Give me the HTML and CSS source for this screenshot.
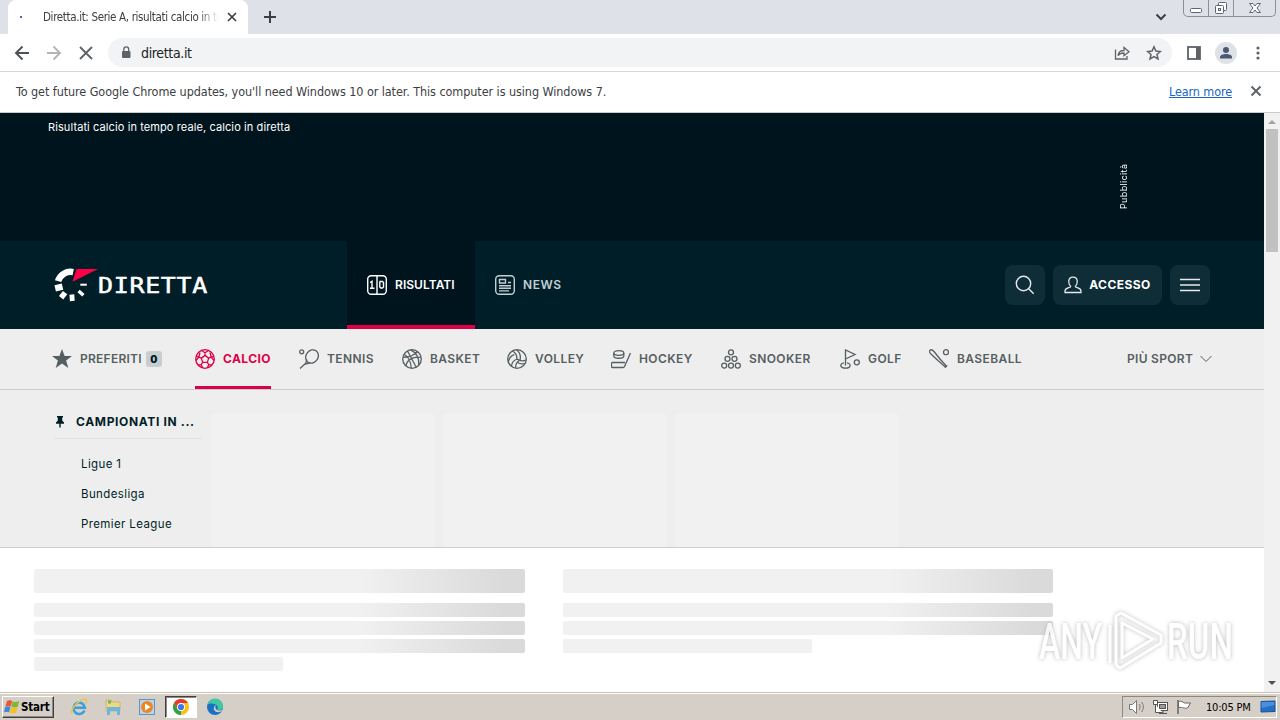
FILE: index.html
```html
<!DOCTYPE html>
<html lang="it">
<head>
    <meta charset="UTF-8">
    <meta name="viewport" content="width=device-width, initial-scale=1.0">
    <title>Diretta.it: Serie A, risultati calcio in tempo reale</title>
    <link rel="stylesheet" href="styles.css">
</head>
<body>
    <div class="tab-strip">
        <div class="tab">
            <span class="tab-loader"></span>
            <span class="tab-title">Diretta.it: Serie A, risultati calcio in te</span>
            <svg class="tab-close" width="10" height="10" viewBox="0 0 10 10" stroke="#3c4043" stroke-width="1.7"><path d="M1 1l8 8M9 1L1 9"/></svg>
        </div>
        <svg class="new-tab" width="14" height="14" viewBox="0 0 14 14" stroke="#3c4043" stroke-width="2"><path d="M7 1v12M1 7h12"/></svg>
        <svg class="tab-search" width="12" height="8" viewBox="0 0 12 8" fill="none" stroke="#3c4043" stroke-width="2"><path d="M1.5 1.5L6 6l4.500-4.500"/></svg>
        <div class="window-controls">
            <span class="control"><svg width="14" height="16" viewBox="0 0 14 16"><rect x="1.500" y="8.500" width="11" height="4" rx="1" fill="#fff" stroke="#60646e"/></svg></span>
            <span class="control"><svg width="14" height="16" viewBox="0 0 14 16" fill="#fff" stroke="#60646e"><rect x="4.500" y="2.500" width="8" height="8" rx="1"/><rect x="1.500" y="5.500" width="8" height="8" rx="1"/><rect x="4.500" y="8.500" width="2" height="2"/></svg></span>
            <span class="control control-close"><svg width="14" height="16" viewBox="0 0 14 16" fill="#fff" stroke="#60646e"><path d="M1.500 3.500h3.500l2 2.500 2-2.500h3.500L9 8l3.500 4.500H9L7 10l-2 2.500H1.500L5 8z"/></svg></span>
        </div>
    </div>

    <div class="toolbar">
        <svg class="tool-back" width="16" height="16" viewBox="0 0 16 16" fill="none" stroke="#4d5156" stroke-width="1.900"><path d="M15 8H2M8.500 1.500L2 8l6.500 6.500"/></svg>
        <svg class="tool-forward" width="16" height="16" viewBox="0 0 16 16" fill="none" stroke="#b3b5b8" stroke-width="1.900"><path d="M1 8h13M7.500 1.500L14 8l-6.500 6.500"/></svg>
        <svg class="tool-stop" width="14" height="14" viewBox="0 0 14 14" stroke="#5f6368" stroke-width="1.900"><path d="M1 1l12 12M13 1L1 13"/></svg>
        <div class="omnibox">
            <svg width="10" height="13" viewBox="0 0 10 13"><rect x="1" y="5" width="8.500" height="7" rx="1" fill="#5f6368"/><path d="M2.800 5.500V3.300a2.400 2.400 0 0 1 4.900 0v2.200" fill="none" stroke="#5f6368" stroke-width="1.300"/></svg>
            <span class="url">diretta.it</span>
            <svg class="share" width="16" height="16" viewBox="0 0 16 16" fill="none" stroke="#5f6368" stroke-width="1.300"><path d="M1.500 4.500v9.500h11.500v-3M4 10.500c.5-3.500 2.500-5 6-5V2.500L15 6.700l-5 4V8c-2.500 0-4.500.5-6 2.500z"/></svg>
            <svg class="bookmark" width="16" height="16" viewBox="0 0 16 16" fill="none" stroke="#5f6368" stroke-width="1.500"><path d="M8 1.800l1.900 4.200 4.500.5-3.400 3 1 4.500L8 11.700 4 14l1-4.500-3.400-3L6.100 6z"/></svg>
        </div>
        <svg class="side-panel" width="14" height="14" viewBox="0 0 14 14"><rect x="1" y="1" width="12" height="12" fill="none" stroke="#5f6368" stroke-width="1.800"/><path d="M9 1h4v12H9z" fill="#5f6368"/></svg>
        <svg class="profile" width="22" height="22" viewBox="0 0 22 22"><circle cx="11" cy="11" r="11" fill="#dee1e6"/><circle cx="11" cy="8" r="3" fill="#4a5873"/><path d="M5 16.500v-1.200c0-2.200 3-3.300 6-3.300s6 1.100 6 3.300v1.200z" fill="#4a5873"/></svg>
        <svg class="menu-dots" width="4" height="14" viewBox="0 0 4 14" fill="#5f6368"><circle cx="2" cy="2" r="1.600"/><circle cx="2" cy="7" r="1.600"/><circle cx="2" cy="12" r="1.600"/></svg>
    </div>

    <div class="infobar">
        <span class="infobar-text">To get future Google Chrome updates, you'll need Windows 10 or later. This computer is using Windows 7.</span>
        <a class="infobar-link" href="#">Learn more</a>
        <svg width="12" height="12" viewBox="0 0 12 12" stroke="#5f6368" stroke-width="1.900"><path d="M1.500 1.500l9 9M10.500 1.500l-9 9"/></svg>
    </div>

    <div class="viewport">
        <main class="page">
            <div class="top-banner">
                <h1 class="seo-title">Risultati calcio in tempo reale, calcio in diretta</h1>
                <span class="ad-label">Pubblicità</span>
            </div>

            <header class="header">
                <div class="logo">
                    <svg width="154" height="34" viewBox="0 0 154 34">
                        <path d="M4.100 13.200A13 13 0 0 1 19.200 4.100" fill="none" stroke="#fff" stroke-width="6.500"/>
                        <g stroke="#fff">
                            <path d="M8.500 18.700l-7.300 1.700" stroke-width="6.500"/>
                            <path d="M11.100 24.600l-4 5.100" stroke-width="5.500"/>
                            <path d="M17.900 26.500l.4 6.500" stroke-width="4.800"/>
                            <path d="M24.600 23l4.800 4.200" stroke-width="3.500"/>
                            <path d="M26.300 16.700h6.500" stroke-width="2"/>
                        </g>
                        <path d="M22.500 1H44L18.500 13.800z" fill="#ff0046"/>
                        <text class="logo-text" x="44" y="25" textLength="110" lengthAdjust="spacingAndGlyphs">DIRETTA</text>
                    </svg>
                </div>
                <nav class="main-nav">
                    <a class="main-link active">
                        <svg width="20" height="20" viewBox="0 0 20 20" fill="none" stroke="#fff" stroke-width="1.400"><rect x=".7" y=".7" width="18.600" height="18.600" rx="3.500"/><path d="M10 1v18M3 7.500l2-1.200V13M3 13.200h4.500M13 6.500h2.500l1 1v4.500l-1 1H13.800l-1-1V7.500z"/></svg>
                        <span>RISULTATI</span>
                    </a>
                    <a class="main-link">
                        <svg width="20" height="20" viewBox="0 0 20 20" fill="none" stroke="#c3cfd3" stroke-width="1.400"><rect x=".7" y=".7" width="18.600" height="18.600" rx="3.500"/><path d="M4.500 4.500h6v3.500h-6zM13 7.500h3M4 10.700h12M4 13.300h12M4 15.900h10"/></svg>
                        <span>NEWS</span>
                    </a>
                </nav>
                <div class="header-buttons">
                    <button class="header-button"><svg width="20" height="20" viewBox="0 0 20 20" fill="none" stroke="#e6eaec" stroke-width="1.400"><circle cx="8.500" cy="8.500" r="7.200"/><path d="M13.700 13.700l5 5"/></svg></button>
                    <button class="header-button login">
                        <svg width="18" height="18" viewBox="0 0 18 18" fill="none" stroke="#e6eaec" stroke-width="1.300"><path d="M6.700 10.500C4 8 3.500 1.200 9 1.200s5 6.800 2.300 9.300c0 1.600 5.700.8 5.700 4.500v1.500H1V15c0-3.700 5.700-2.900 5.700-4.500z"/></svg>
                        <span>ACCESSO</span>
                    </button>
                    <button class="header-button"><svg width="20" height="14" viewBox="0 0 20 14" stroke="#e6eaec" stroke-width="1.700"><path d="M0 1.500h20M0 7h20M0 12.500h20"/></svg></button>
                </div>
            </header>

            <nav class="sport-nav">
                <a class="sport favourites">
                    <svg width="20" height="20" viewBox="0 0 20 20" fill="#555e61"><path d="M10 0l2.600 7H20l-5.900 4.500 2.200 7.500-6.300-4.500L3.700 19l2.200-7.500L0 7h7.400z"/></svg>
                    <span>PREFERITI</span><b class="fav-count">0</b>
                </a>
                <a class="sport active">
                    <svg width="20" height="20" viewBox="0 0 20 20"><circle cx="10" cy="10" r="9.300"/><path d="M10 6.400l3.700 2.700-1.400 4.300H7.700L6.300 9.100zM10 6.400V3.700M13.700 9.100l2.500-.9M12.300 13.400l1.600 2.200M7.700 13.400l-1.600 2.200M6.300 9.100l-2.500-.9M6.500 1.500L10 3.700l3.500-2.200M18.900 7.300l-2.700.9-1.200-4.700M16.900 16l-3 -.4-1.700 3.300M7.800 18.900l-1.700-3.300-3 .4M1.100 7.300l2.700.9 1.200-4.700M1 11.500l2.800-3.300M19 11.500l-2.800-3.300"/></svg>
                    <span>CALCIO</span>
                </a>
                <a class="sport">
                    <svg width="20" height="20" viewBox="0 0 20 20"><ellipse cx="13" cy="7.500" rx="6" ry="7" transform="rotate(38 13 7.500)"/><path d="M7.800 10.300L6.500 15l4.800-1.200M6.500 14.500L1 19.500"/><circle cx="2.700" cy="2.800" r="2"/></svg>
                    <span>TENNIS</span>
                </a>
                <a class="sport">
                    <svg width="20" height="20" viewBox="0 0 20 20"><circle cx="10" cy="10" r="9.300"/><path d="M5.500 2l8.900 16.500M1 8.200C7 8.700 13 5.800 15.500 2.500M4 17C4.500 11.500 10.500 7 19 8.300M8.500.8C14 3.200 17.500 9 16.800 16M2 5.200C6 7.500 9 12 9.200 19"/></svg>
                    <span>BASKET</span>
                </a>
                <a class="sport">
                    <svg width="20" height="20" viewBox="0 0 20 20"><circle cx="10" cy="10" r="9.300"/><path d="M10 10C10 6.500 8.500 3.500 5.500 2M10 10c-3.500 1.500-5.500 4.500-5.500 7.500M10 10c3 2 6 2.500 9 1M13 11.500C14 7 12.500 3 9.500.8M7.300 5.600C4.500 6.500 2 9 1.300 13M8.700 18.900c-.2-3 .8-5.500 3.300-7.200M10.500 13.500c2.500 1.500 4.500 1.800 7 1"/></svg>
                    <span>VOLLEY</span>
                </a>
                <a class="sport">
                    <svg width="20" height="20" viewBox="0 0 20 20"><ellipse cx="7.800" cy="4" rx="5" ry="2.300"/><path d="M2.800 4v3c0 3 10 3 10 0V4M19.500 4l-6 13.500c-.3.700-.8 1-1.500 1H1.500c-.7 0-1-.4-1-1v-3c0-.6.300-1 1-1H14"/></svg>
                    <span>HOCKEY</span>
                </a>
                <a class="sport">
                    <svg width="20" height="20" viewBox="0 0 20 20"><circle cx="10" cy="3.300" r="2.500"/><circle cx="6.500" cy="9.800" r="2.500"/><circle cx="13.500" cy="9.800" r="2.500"/><circle cx="3.200" cy="16.600" r="2.500"/><circle cx="10" cy="16.600" r="2.500"/><circle cx="16.800" cy="16.600" r="2.500"/></svg>
                    <span>SNOOKER</span>
                </a>
                <a class="sport">
                    <svg width="20" height="20" viewBox="0 0 20 20"><path d="M5.500 16.500V1l9.500 4.500-9.500 4.500M4 13.800c-4.500.5-4.500 5.400 1.500 5.400s5.800-4.900 1.500-5.400"/><circle cx="16.800" cy="13.300" r="2.500"/></svg>
                    <span>GOLF</span>
                </a>
                <a class="sport">
                    <svg width="20" height="20" viewBox="0 0 20 20"><path d="M1 1.200c1.300-1 2.500-.4 4 1.300l6 7.500 6.500 7.200-1 1L9.500 12 2.200 5.200C.6 3.800 0 2.300 1 1.200zM15.800 18.800l2.400-2.400"/><circle cx="17" cy="3.200" r="2.500"/></svg>
                    <span>BASEBALL</span>
                </a>
                <a class="sport more">
                    <span>PIÙ SPORT</span>
                    <svg width="12" height="8" viewBox="0 0 12 8"><path d="M.5 1L6 6.500 11.500 1"/></svg>
                </a>
            </nav>

            <section class="leagues">
                <aside class="pinned">
                    <div class="pinned-title">
                        <svg width="8" height="12" viewBox="0 0 8 12" fill="#001e28"><path d="M1 0h6v1.500h-.8v3L8 6.500v1.200H4.700V11L4 12l-.7-1V7.700H0V6.500l1.800-2v-3H1z"/></svg>
                        <span>CAMPIONATI IN ...</span>
                    </div>
                    <ul>
                        <li>Ligue 1</li>
                        <li>Bundesliga</li>
                        <li>Premier League</li>
                    </ul>
                </aside>
                <div class="card"></div>
                <div class="card"></div>
                <div class="card"></div>
            </section>

            <section class="skeletons">
                <div class="skeleton-group">
                    <div class="bar heading"></div>
                    <div class="bar"></div>
                    <div class="bar"></div>
                    <div class="bar"></div>
                    <div class="bar short"></div>
                </div>
                <div class="skeleton-group">
                    <div class="bar heading"></div>
                    <div class="bar"></div>
                    <div class="bar"></div>
                    <div class="bar short"></div>
                </div>
            </section>
        </main>
        <div class="scrollbar">
            <svg width="16" height="16" viewBox="0 0 16 16"><path d="M4 11l4-4 4 4z" fill="#a3a3a3"/></svg>
            <div class="thumb"></div>
            <svg class="scroll-down" width="16" height="16" viewBox="0 0 16 16"><path d="M4 5l4 4 4-4z" fill="#505050"/></svg>
        </div>
    </div>

    <div class="taskbar">
        <div class="start">
            <svg width="16" height="16" viewBox="0 0 16 16"><path d="M3 2c2-1.300 3.500-1 5.200 0L6.700 7.300C5.200 6.500 3.500 6.500 1.500 7.300z" fill="#e8562a"/><path d="M8.700 2.300c1.800.9 3.500 1 6.500-.3L13.700 7.700c-2 1-4.300.8-6.500 0z" fill="#7fb539"/><path d="M1.300 7.800c1.700-.8 3.600-.7 5.200 0L5.100 13.200c-1.500-.8-3.400-.7-5.100 0z" fill="#3f86d8"/><path d="M7.100 8.200c2 .8 4.400.9 6.500 0l-1.500 5.500c-2 .9-4.300.8-6.500 0z" fill="#f6bf28"/></svg>
            <span>Start</span>
        </div>
        <div class="quick-launch">
            <svg width="18" height="18" viewBox="0 0 18 18" fill="none"><path d="M14.500 12.500a5.700 5.700 0 1 1 .4-2.800H4.500" stroke="#3aa0dc" stroke-width="2.500"/><path d="M2 15.500C-1 13 9 1 15 1.300c2 .2 1.800 2.200.8 4" stroke="#e9c44a" stroke-width="1.500"/></svg>
            <svg width="18" height="18" viewBox="0 0 18 18"><path d="M2 4V2h5l1 2h8v9H2z" fill="#f0d783" stroke="#c9a84d" stroke-width=".7"/><path d="M4 2.500h3v3H4z" fill="#6fb65f"/><path d="M3 9h13v8h-3v-4H6v4H3z" fill="#6bb6da"/></svg>
            <svg width="18" height="18" viewBox="0 0 18 18"><rect x="1.500" y="1.500" width="15" height="15" fill="#b8d5ee" stroke="#5e93c6"/><circle cx="9" cy="9" r="6" fill="#ee8520"/><path d="M7 5.500L12.500 9 7 12.500z" fill="#fff"/></svg>
            <div class="task-active">
                <svg width="16" height="16" viewBox="0 0 16 16"><circle cx="8" cy="8" r="8" fill="#fbc116"/><path d="M1.070 4A8 8 0 0 1 14.930 4H8L4.540 10z" fill="#e33b2e"/><path d="M1.070 4l3.470 6L8 12v4A8 8 0 0 1 1.070 4z" fill="#2da14c"/><circle cx="8" cy="8" r="4" fill="#fff"/><circle cx="8" cy="8" r="3.100" fill="#3b78e7"/></svg>
            </div>
            <svg width="18" height="18" viewBox="0 0 18 18"><circle cx="9" cy="9" r="8" fill="#1772c2"/><path d="M1.200 7A8 8 0 0 1 17 9.500c-.5 2.500-3.500 3-6 2 1.500-1.500 1-4-1.500-5C6 5 2.500 5.500 1.200 7z" fill="#42c7a3"/><path d="M10.500 7c-1.500 1-1.700 3.500 0 4.700 1.700 1.100 4.500 1 6-.2-1 2.500-4 3.300-6.500 2.200C7 12.200 7 8 10.500 7z" fill="#d6cfc7"/></svg>
        </div>
        <div class="tray">
            <svg width="18" height="16" viewBox="0 0 18 16" stroke="#777" fill="#fff"><path d="M1.500 5.500h3l4-4v13l-4-4h-3z"/><path d="M11 5c1.500 2 1.500 4 0 6M13.500 3c2.500 3 2.500 7 0 10" fill="none"/></svg>
            <svg width="18" height="16" viewBox="0 0 18 16" stroke="#555" fill="#fff"><rect x="5.500" y="3.500" width="10" height="8"/><rect x="7.500" y="5.500" width="6" height="4" fill="#9a9a9a"/><path d="M1.500 1.500h4v4h-4zM3.500 5.500v8h7M7 14.500h8M11 11.500v3"/></svg>
            <svg width="18" height="16" viewBox="0 0 18 16" stroke="#666" fill="#fff"><path d="M2 1v14" stroke-width="1.500"/><path d="M2.500 2.500c3-1 4 .5 6 1.500h6l-3 5c-3 1-4-1-9-.5z"/></svg>
            <span class="clock">10:05 PM</span>
            <svg width="16" height="14" viewBox="0 0 16 14"><path d="M1 1.500l14-.5v10.500l-14 .5z" fill="#2470c8" stroke="#184f91"/><path d="M1.500 2h13v3L1.500 8z" fill="#4a90dc"/></svg>
        </div>
    </div>

    <svg class="watermark" width="216" height="72" viewBox="0 0 216 72">
        <g class="watermark-text">
            <text x="5" y="53" textLength="63" lengthAdjust="spacingAndGlyphs">ANY</text>
            <text x="133" y="53" textLength="66" lengthAdjust="spacingAndGlyphs">RUN</text>
        </g>
        <g class="watermark-mark" fill="none" stroke-linejoin="round">
            <path d="M82 59V10l5-3 40 22v8L86 62l-4-3"/>
            <path d="M88 17l31 16-31 19V17zM76 19v38"/>
        </g>
    </svg>
</body>
</html>
```
FILE: styles.css
```css
:root {
    --dark: #00141e;
    --header: #001e28;
    --button: #0f2d37;
    --accent: #dc0046;
    --grey: #eeeeee;
    --icon: #555e61;
    --line: #c8cccd;
    --taskbar: #d6cfc7;
}

* {
    box-sizing: border-box;
}

body {
    margin: 0;
    width: 1280px;
    height: 720px;
    overflow: hidden;
    display: flex;
    flex-direction: column;
    position: relative;
    background: #fff;
    font-family: "DejaVu Sans Condensed", "DejaVu Sans", sans-serif;
    color: #3c4043;
}

svg {
    display: block;
    flex: none;
}

span {
    white-space: nowrap;
}

/* Browser chrome */
.tab-strip {
    height: 34px;
    flex: none;
    display: flex;
    align-items: center;
    background: #dee1e8;
}

.tab {
    display: flex;
    align-items: center;
    width: 240px;
    height: 34px;
    margin-left: 8px;
    padding-left: 12px;
    background: #fff;
    border-radius: 8px 8px 0 0;
}

.tab-loader {
    width: 2px;
    height: 2px;
    background: #4a67c0;
}

.tab-title {
    width: 176px;
    margin: 0 8px 0 21px;
    font-size: 11.5px;
    letter-spacing: -0.35px;
    -webkit-mask-image: linear-gradient(90deg, #000 88%, transparent);
    mask-image: linear-gradient(90deg, #000 88%, transparent);
}

.new-tab {
    margin-left: 15px;
}

.tab-search {
    margin-left: auto;
}

.window-controls {
    display: flex;
    align-self: flex-start;
    height: 17px;
    margin: 0 4px 0 16px;
    border: 1px solid #8b8f99;
    border-top: 0;
    border-radius: 0 0 5px 5px;
}

.control {
    display: flex;
    justify-content: center;
    width: 25px;
    border-right: 1px solid #8b8f99;
}

.control-close {
    width: 41px;
    border-right: 0;
}

.toolbar {
    height: 38px;
    flex: none;
    display: flex;
    align-items: center;
    padding: 0 20px 0 14px;
    border-bottom: 1px solid #d5d7da;
}

.tool-forward {
    margin-left: 16px;
}

.tool-stop {
    margin: 0 15px 0 17px;
}

.omnibox {
    display: flex;
    align-items: center;
    width: 1064px;
    height: 29px;
    padding: 0 10px 0 13px;
    border-radius: 15px;
    background: #f1f3f4;
}

.url {
    margin-left: 10px;
    font-size: 14px;
    letter-spacing: -0.35px;
    color: #202124;
}

.share {
    margin-left: auto;
}

.bookmark {
    margin-left: 16px;
}

.side-panel {
    margin-left: 15px;
}

.profile {
    margin-left: 14px;
}

.menu-dots {
    margin-left: auto;
}

.infobar {
    height: 41px;
    flex: none;
    display: flex;
    align-items: center;
    padding: 0 18px 2px 16px;
    border-bottom: 1px solid #c9cbcd;
    font-size: 12.5px;
}

.infobar-text {
    letter-spacing: -0.07px;
}

.infobar-link {
    margin: 0 18px 0 auto;
    color: #1a66c0;
    letter-spacing: -0.1px;
}

/* Page */
.viewport {
    height: 579px;
    flex: none;
    display: flex;
}

.page {
    width: 1264px;
    font-family: Inter, "Liberation Sans", sans-serif;
    color: #001e28;
}

.top-banner {
    display: flex;
    justify-content: space-between;
    height: 128px;
    padding: 7px 134px 0 48px;
    background: var(--dark);
    color: #fff;
}

.seo-title {
    margin: 0;
    font-size: 11px;
    font-weight: 400;
    line-height: 14px;
    letter-spacing: 0.1px;
}

.ad-label {
    height: 46px;
    margin-top: 43px;
    writing-mode: vertical-rl;
    transform: rotate(180deg);
    font-size: 9px;
    line-height: 12px;
    letter-spacing: 0.35px;
}

.header {
    display: flex;
    height: 88px;
    padding: 0 54px;
    background: var(--header);
}

.logo {
    display: flex;
    align-items: center;
    width: 293px;
}

.logo-text {
    font-family: "DejaVu Sans Mono", monospace;
    font-size: 22px;
    letter-spacing: 0.6px;
    fill: #fff;
    stroke: #fff;
    stroke-width: 0.5px;
}

.main-nav {
    display: flex;
}

.main-link {
    display: flex;
    align-items: center;
    gap: 8px;
    padding: 4px 20px 0;
    border-bottom: 4px solid transparent;
    color: #c3cfd3;
    font-size: 12px;
    font-weight: 600;
    letter-spacing: 0.6px;
}

.main-link span {
    margin-top: -2px;
}

.main-link.active {
    width: 128px;
    background: var(--dark);
    border-color: var(--accent);
    color: #fff;
    letter-spacing: 0.05px;
}

.header-buttons {
    display: flex;
    align-items: center;
    gap: 8px;
    margin-left: auto;
}

.header-button {
    display: flex;
    align-items: center;
    justify-content: center;
    gap: 7px;
    width: 40px;
    height: 40px;
    padding: 0;
    border: 0;
    border-radius: 8px;
    background: var(--button);
    color: #fff;
    font: 700 12px Inter, sans-serif;
    letter-spacing: 0.45px;
}

.login {
    width: 109px;
}

.login span {
    margin-top: -2px;
}

.sport-nav {
    display: grid;
    grid-template-columns: 143px 104px 103px 105px 104px 110px 119px 89px 198px 86px;
    height: 61px;
    padding-left: 52px;
    background: var(--grey);
    border-bottom: 1px solid var(--line);
}

.sport {
    display: flex;
    align-items: center;
    justify-self: start;
    gap: 8px;
    border-bottom: 3px solid transparent;
    padding-top: 2px;
    color: var(--icon);
    font-size: 12px;
    font-weight: 600;
    letter-spacing: 0.4px;
}

.sport svg[width="20"]:not([fill]),
.more svg {
    fill: none;
    stroke: currentColor;
    stroke-width: 1.3;
}

.favourites {
    letter-spacing: 0.25px;
}

.more {
    gap: 7px;
    letter-spacing: 0.3px;
}

.more svg {
    stroke-width: 1;
}

.sport.active {
    height: 60px;
    color: var(--accent);
    border-color: var(--accent);
    font-weight: 700;
}

.fav-count {
    width: 16px;
    margin-left: -4px;
    border-radius: 3px;
    background: #c8cdd0;
    color: #001e28;
    font-size: 10px;
    line-height: 16px;
    text-align: center;
    letter-spacing: 0;
}

.leagues {
    display: flex;
    height: 158px;
    padding: 24px 0 0 54px;
    background: var(--grey);
    border-bottom: 1px solid #cfcfcf;
}

.pinned {
    width: 148px;
    margin-right: 9px;
}

.pinned-title {
    display: flex;
    align-items: center;
    gap: 12px;
    height: 25px;
    padding: 0 0 9px 2px;
    border-bottom: 1px solid #e2e2e2;
    font-size: 12px;
    font-weight: 700;
    letter-spacing: 0.65px;
}

.pinned ul {
    margin: 10px 0 0;
    padding: 0 0 0 27px;
    list-style: none;
    font-size: 11.5px;
    line-height: 30px;
    letter-spacing: 0.38px;
}

.card {
    width: 223px;
    margin-right: 9px;
    background: #f1f1f1;
}

.skeletons {
    display: flex;
    gap: 38px;
    padding: 21px 34px 0;
}

.skeleton-group {
    width: 490.5px;
    display: flex;
    flex-direction: column;
    gap: 4px;
}

.bar {
    height: 14px;
    border-radius: 2px;
    background: linear-gradient(90deg, #f1f1f1 66%, #dadada 96%);
}

.heading {
    height: 24px;
    margin-bottom: 6px;
}

.short {
    width: 249px;
    background: #f1f1f1;
}

.scrollbar {
    width: 16px;
    display: flex;
    flex-direction: column;
    background: #f1f1f1;
}

.thumb {
    width: 12px;
    height: 123px;
    margin-left: 2px;
    background: #c1c1c1;
}

.scroll-down {
    margin-top: auto;
}

/* Windows taskbar */
.taskbar {
    height: 28px;
    flex: none;
    display: flex;
    align-items: center;
    padding: 1px 3px 0 2px;
    background: var(--taskbar);
    border-top: 1px solid #c5c1ad;
    box-shadow: inset 0 1px #fff;
    color: #000;
}

.start {
    display: flex;
    align-items: center;
    gap: 1px;
    width: 52px;
    height: 22px;
    padding-left: 1px;
    border: 1px solid;
    border-color: #fff #404040 #404040 #fff;
    box-shadow: inset -1px -1px #8d8982;
    font-size: 11.5px;
    font-weight: 700;
    letter-spacing: -0.2px;
}

.quick-launch {
    display: flex;
    align-items: center;
    gap: 16px;
    margin-left: 16px;
}

.task-active {
    width: 32px;
    height: 22px;
    display: flex;
    align-items: center;
    justify-content: center;
    margin: 0 -7px 0 -7px;
    border: 1px solid;
    border-color: #404040 #fff #fff #404040;
    box-shadow: inset 1px 1px #8d8982;
    background: #fff;
}

.tray {
    display: flex;
    align-items: center;
    gap: 6px;
    width: 155px;
    height: 22px;
    margin-left: auto;
    padding-left: 5px;
    border: 1px solid;
    border-color: #8d8982 #fff #fff #8d8982;
    font-size: 11px;
    letter-spacing: -0.2px;
}

.clock {
    width: 46px;
    margin: 0 3px 0 6px;
}

/* Watermark lies over the page */
.watermark {
    position: absolute;
    left: 1034px;
    top: 606px;
    overflow: visible;
    opacity: 0.8;
    filter: drop-shadow(0 0 2px #aaa);
}

.watermark-text {
    font: 500 50px Roboto, sans-serif;
    fill: #fff;
}

.watermark-mark {
    stroke: #fff;
    stroke-width: 3;
}
```
